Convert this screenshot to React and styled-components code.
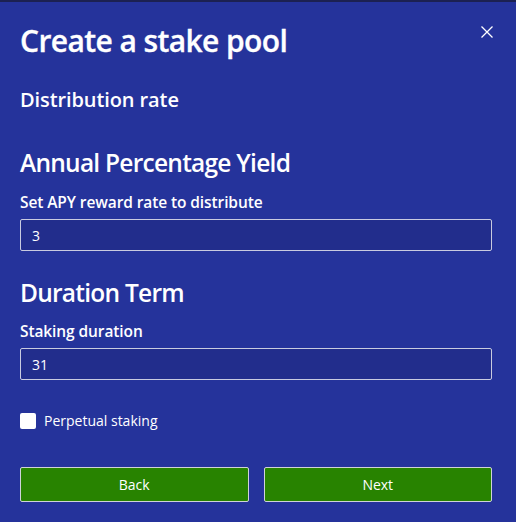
import React, { useState } from "react";
import styled, { createGlobalStyle } from "styled-components";

const Global = createGlobalStyle`
  html, body { margin: 0; padding: 0; background: #25339b; }
  * { box-sizing: border-box; }
`;

const Modal = styled.div`
  width: 516px;
  height: 522px;
  background: #25339b;
  border-top: 2px solid #1c2152;
  padding: 21px 24px 0 20px;
  font-family: "Open Sans", "Noto Sans", sans-serif;
  color: #fff;
`;

const Header = styled.div`
  display: flex;
  justify-content: space-between;
  align-items: flex-start;
`;

const Title = styled.h1`
  margin: 0;
  font-size: 30px;
  line-height: 36px;
  font-weight: 600;
  letter-spacing: -0.6px;
  -webkit-text-stroke: 0.3px #fff;
`;

const Close = styled.button`
  background: none;
  border: none;
  padding: 0;
  margin: 2px -2px 0 0;
  width: 14px;
  height: 14px;
  cursor: pointer;
  display: flex;
`;

const Step = styled.h2`
  margin: 29px 0 0;
  font-size: 20px;
  line-height: 24px;
  font-weight: 600;
  letter-spacing: -0.1px;
`;

const Section = styled.h3`
  margin: ${(p) => p.$top}px 0 0;
  font-size: 24.5px;
  line-height: 30px;
  font-weight: 600;
  letter-spacing: -0.75px;
`;

const Label = styled.label`
  display: block;
  margin: ${(p) => p.$top}px 0 7px;
  font-size: 15.5px;
  line-height: 20px;
  font-weight: 600;
  letter-spacing: -0.1px;
`;

const Input = styled.input`
  display: block;
  width: 100%;
  height: 32px;
  background: #222d8c;
  border: 1px solid #c9cbe0;
  border-radius: 2px;
  color: #fff;
  font-family: inherit;
  font-size: 14px;
  padding: 0 11px;
  outline: none;
`;

const CheckRow = styled.label`
  display: flex;
  align-items: center;
  gap: 8px;
  margin-top: 33px;
  font-size: 14px;
  line-height: 16px;
  cursor: pointer;
`;

const Box = styled.span`
  width: 16px;
  height: 16px;
  border-radius: 2px;
  background: #fff;
  display: flex;
  align-items: center;
  justify-content: center;
  color: #25339b;
  font-size: 12px;
`;

const Buttons = styled.div`
  display: grid;
  grid-template-columns: 1fr 1fr;
  gap: 15px;
  margin-top: 38px;
`;

const Button = styled.button`
  height: 35px;
  background: #288300;
  border: 1px solid #cfd3d8;
  border-radius: 2px;
  color: #fff;
  font-family: inherit;
  font-size: 14px;
  cursor: pointer;
`;

export default function App() {
  const [apy, setApy] = useState("3");
  const [days, setDays] = useState("31");
  const [perpetual, setPerpetual] = useState(false);

  return (
    <>
      <Global />
      <Modal>
        <Header>
          <Title>Create a stake pool</Title>
          <Close aria-label="Close">
            <svg width="14" height="14" viewBox="0 0 14 14">
              <path d="M1.5 1.5 L12.5 12.5 M12.5 1.5 L1.5 12.5" stroke="#fff" strokeWidth="1.3" />
            </svg>
          </Close>
        </Header>
        <Step>Distribution rate</Step>

        <Section $top={36}>Annual Percentage Yield</Section>
        <Label $top={14}>Set APY reward rate to distribute</Label>
        <Input value={apy} onChange={(e) => setApy(e.target.value)} />

        <Section $top={27}>Duration Term</Section>
        <Label $top={13}>Staking duration</Label>
        <Input value={days} onChange={(e) => setDays(e.target.value)} />

        <CheckRow onClick={() => setPerpetual(!perpetual)}>
          <Box>{perpetual ? "✓" : ""}</Box>
          Perpetual staking
        </CheckRow>

        <Buttons>
          <Button>Back</Button>
          <Button>Next</Button>
        </Buttons>
      </Modal>
    </>
  );
}
